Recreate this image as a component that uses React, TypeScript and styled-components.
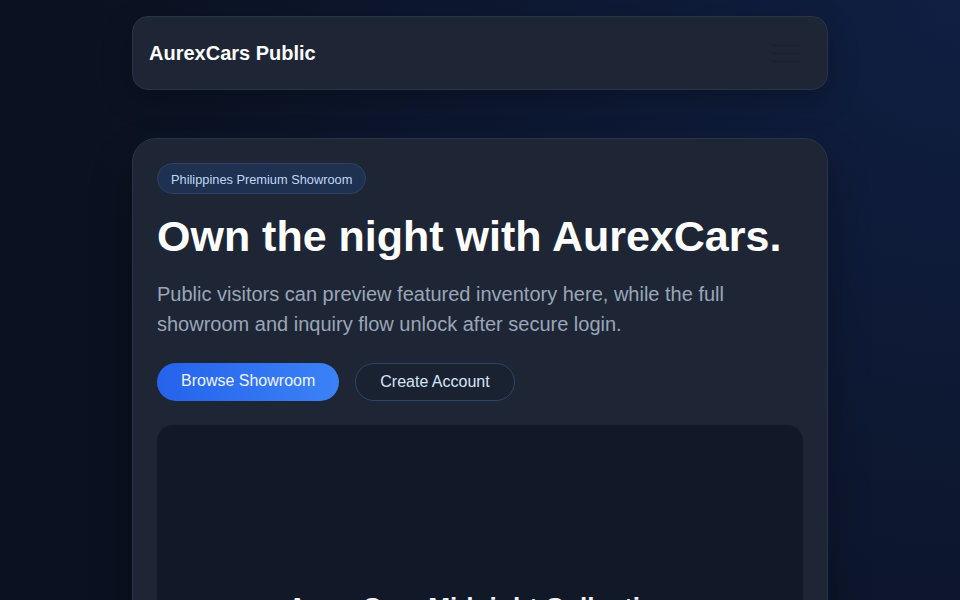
import React from "react";
import styled, { createGlobalStyle } from "styled-components";

const GlobalStyle = createGlobalStyle`
  * { box-sizing: border-box; }
  html, body {
    margin: 0;
    padding: 0;
    min-height: 100%;
  }
  body {
    font-family: "Liberation Sans", Arial, sans-serif;
    color: #f8fafc;
    background:
      radial-gradient(circle at 100% 0%, rgba(37, 99, 235, 0.17) 0%, rgba(37, 99, 235, 0.07) 45%, rgba(37, 99, 235, 0) 75%),
      #0b1120;
    min-height: 100vh;
    overflow: hidden;
  }
`;

const Page = styled.div`
  width: 696px;
  margin: 0 auto;
  padding-top: 16px;
  display: flex;
  flex-direction: column;
  gap: 48px;
`;

const NavBar = styled.header`
  height: 74px;
  padding: 0 16px;
  display: flex;
  align-items: center;
  justify-content: space-between;
  background: #1e2636;
  border: 1px solid #283449;
  border-radius: 16px;
  box-shadow: 0 10px 30px rgba(0, 0, 0, 0.25);
`;

const Brand = styled.div`
  font-size: 20px;
  font-weight: 700;
  color: #ffffff;
`;

const MenuButton = styled.button`
  width: 50px;
  height: 40px;
  display: flex;
  flex-direction: column;
  align-items: center;
  justify-content: center;
  gap: 5px;
  background: transparent;
  border: none;
  padding: 0;
`;

const MenuBar = styled.span`
  display: block;
  width: 28px;
  height: 3px;
  border-radius: 2px;
  background: #1b2232;
`;

const Hero = styled.section`
  background: #1e2636;
  border: 1px solid #283449;
  border-radius: 24px;
  padding: 24px;
  display: flex;
  flex-direction: column;
  box-shadow: 0 20px 40px rgba(0, 0, 0, 0.3);
`;

const Badge = styled.span`
  align-self: flex-start;
  padding: 8px 13px 6px;
  font-size: 12.8px;
  line-height: 15px;
  color: #bfd7f5;
  background: #1f3150;
  border: 1px solid #2c4266;
  border-radius: 999px;
`;

const Title = styled.h1`
  margin: 19px 0 0;
  font-size: 43px;
  line-height: 46px;
  font-weight: 700;
  color: #ffffff;
`;

const Lead = styled.p`
  margin: 20px 0 0;
  font-size: 20px;
  line-height: 30px;
  color: #9aa6b8;
`;

const Actions = styled.div`
  margin-top: 24px;
  display: flex;
  gap: 16px;
`;

const Button = styled.button<{ $primary?: boolean }>`
  font-family: "Liberation Sans", Arial, sans-serif;
  font-size: 16px;
  line-height: 18px;
  padding: ${(p) => (p.$primary ? "9px 24px 11px" : "9px 24px")};
  border-radius: 999px;
  cursor: pointer;
  color: ${(p) => (p.$primary ? "#eef4ff" : "#d6e4f7")};
  background: ${(p) =>
    p.$primary ? "linear-gradient(90deg, #2563eb 0%, #3b82f6 100%)" : "#1a2232"};
  border: ${(p) => (p.$primary ? "none" : "1px solid #2f4468")};
`;

const Showcase = styled.div`
  margin-top: 24px;
  height: 260px;
  background: #111827;
  border-radius: 16px;
  display: flex;
  flex-direction: column;
  align-items: center;
  padding-top: 167px;
`;

const ShowcaseTitle = styled.h2`
  margin: 0;
  font-size: 26.3px;
  line-height: 1.2;
  font-weight: 700;
  color: #f1f5f9;
`;

export default function App() {
  return (
    <>
      <GlobalStyle />
      <Page>
        <NavBar>
          <Brand>AurexCars Public</Brand>
          <MenuButton aria-label="Open menu">
            <MenuBar />
            <MenuBar />
            <MenuBar />
          </MenuButton>
        </NavBar>
        <Hero>
          <Badge>Philippines Premium Showroom</Badge>
          <Title>Own the night with AurexCars.</Title>
          <Lead>
            Public visitors can preview featured inventory here, while the full
            showroom and inquiry flow unlock after secure login.
          </Lead>
          <Actions>
            <Button $primary>Browse Showroom</Button>
            <Button>Create Account</Button>
          </Actions>
          <Showcase>
            <ShowcaseTitle>AurexCars Midnight Collection</ShowcaseTitle>
          </Showcase>
        </Hero>
      </Page>
    </>
  );
}
